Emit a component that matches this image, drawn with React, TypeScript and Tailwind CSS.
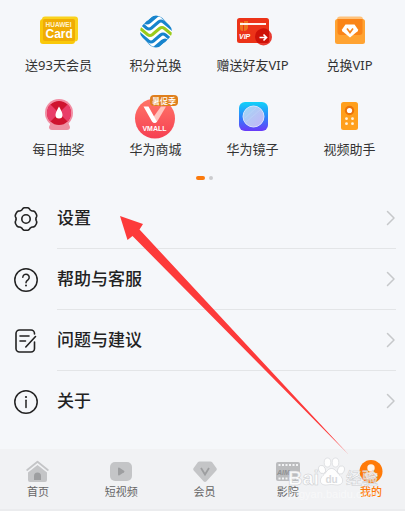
import type { ReactNode } from 'react'

const cjk = "font-['Noto_Sans','Noto_Sans_CJK_SC',sans-serif]"

// Outline of a six-toothed gear centred in a 24x24 box, one tooth pointing up.
const gearPath =
  Array.from({ length: 120 }, (_, i) => {
    const a = (i / 120) * Math.PI * 2
    const r = 10.5 + 0.9 * Math.tanh(0.8 - 1.6 * Math.cos(6 * a))
    return `${i ? 'L' : 'M'}${(12 + r * Math.cos(a)).toFixed(2)} ${(12 + r * Math.sin(a)).toFixed(2)}`
  }).join('') + 'Z'

function Tile({ children }: { children: ReactNode }) {
  return (
    <svg viewBox="0 0 49 48" className="block h-12 w-[49px]" aria-hidden="true">
      {children}
    </svg>
  )
}

function Glyph({ children }: { children: ReactNode }) {
  return (
    <svg viewBox="0 0 24 24" className="block size-6 shrink-0" fill="none" aria-hidden="true">
      {children}
    </svg>
  )
}

const wave = 'M4 17L16.500 27.500Q19 29.500 21.500 27.500L28.500 21.500Q31 19.500 33.500 21.500L46 32'

const shortcuts: { label: string; icon: ReactNode }[] = [
  {
    label: '送93天会员',
    icon: (
      <Tile>
        <rect x="8" y="9.500" width="36" height="25" rx="3" fill="#fad21c" />
        <rect x="6" y="12" width="35" height="25" rx="3" fill="#f9c80a" />
        <rect x="9" y="12" width="32" height="22" rx="2" fill="#f0ac04" />
        <text x="11.500" y="20" fontSize="6.500" fontWeight="700" fill="#fff3cd" fontFamily="Liberation Sans, sans-serif">HUAWEI</text>
        <text x="11.500" y="31" fontSize="12" fontWeight="700" fill="#fff" fontFamily="Liberation Sans, sans-serif">Card</text>
      </Tile>
    ),
  },
  {
    label: '积分兑换',
    icon: (
      <Tile>
        <clipPath id="logo-clip">
          <rect x="11" y="10.500" width="28" height="28" rx="9" transform="rotate(45 25 24.500)" />
        </clipPath>
        <g clipPath="url(#logo-clip)" fill="none" strokeWidth="3">
          <rect x="5" y="5" width="40" height="40" fill="#fff" />
          <path d={wave} transform="translate(-3 -13)" stroke="#1784cd" strokeWidth="4" />
          <path d={wave} transform="translate(-1 -6.500)" stroke="#1784cd" />
          <path d={wave} stroke="#9bcb1c" />
          <path d={wave} transform="translate(1 6.500)" stroke="#1784cd" />
          <path d={wave} transform="translate(3 13)" stroke="#1784cd" strokeWidth="4" />
        </g>
      </Tile>
    ),
  },
  {
    label: '赠送好友VIP',
    icon: (
      <Tile>
        <rect x="9" y="11" width="32" height="25" rx="2.500" fill="#ec3318" />
        <path d="M12 15h3v9q-3 0-3-3zM16 14h4v7q-1 3-4 3z" fill="#ee7420" />
        <rect x="12" y="16" width="26" height="2" fill="#fff2ed" />
        <text x="11" y="32" fontSize="7" fontWeight="700" fontStyle="italic" fill="#fff" fontFamily="Liberation Sans, sans-serif">VIP</text>
        <circle cx="35.500" cy="30" r="8.500" fill="#e83a30" />
        <path d="M27 30a8.500 8.500 0 0 1 14-6.500V34a2 2 0 0 1-2 2H29.500A8.500 8.500 0 0 1 27 30" fill="#cf1208" />
        <path d="M31.500 30.500H38M35.500 27.500l3 3-3 3" stroke="#fff" strokeWidth="1.700" fill="none" />
      </Tile>
    ),
  },
  {
    label: '兑换VIP',
    icon: (
      <Tile>
        <rect x="12" y="9.500" width="26" height="18" rx="3" fill="#ffc27a" />
        <rect x="10" y="12" width="30" height="25" rx="2.500" fill="#ffa332" />
        <path d="M12.500 12h25v13a3 3 0 0 1-3 3h-19a3 3 0 0 1-3-3z" fill="#fa8418" />
        <path d="M20.500 17.500h9L33 22.500q.3 1-.4 1.700L25 30.500l-7.600-6.300q-.7-.7-.4-1.700z" fill="#fff" />
        <path d="M22 21.500l3 4 3-4" stroke="#f8841c" strokeWidth="1.700" fill="none" />
      </Tile>
    ),
  },
  {
    label: '每日抽奖',
    icon: (
      <Tile>
        <circle cx="25" cy="22" r="14" fill="#f18da2" />
        <path d="M17 31h17l2 5q0 3-3 3H18q-3 0-3-3z" fill="#ee90a2" />
        <circle cx="25" cy="22" r="12" fill="#cf142f" />
        <path d="M25 22L16.500 13.500a12 12 0 0 0 0 17zM25 22l8.500-8.500a12 12 0 0 1 0 17z" fill="#e93e69" />
        <path d="M25 15.500q3.500 6 3.500 8.500a3.500 3.500 0 0 1-7 0q0-2.500 3.500-8.500" fill="#fff" />
      </Tile>
    ),
  },
  {
    label: '华为商城',
    icon: (
      <Tile>
        <linearGradient id="mall" x1="0" y1="0" x2="0" y2="1">
          <stop offset="0" stopColor="#ff7668" />
          <stop offset="1" stopColor="#f63f52" />
        </linearGradient>
        <circle cx="24" cy="27.500" r="20" fill="url(#mall)" />
        <path d="M30 15.500h5L26.500 30q-2 3-4.500 0l-1-2z" fill="#ffc4bf" />
        <path d="M12.500 15.500h5L25 29l1 1.500q-2.500 3-5 0z" fill="#fff" />
        <text x="23.500" y="40" fontSize="7" fontWeight="700" textAnchor="middle" fill="#fff" fontFamily="Liberation Sans, sans-serif">VMALL</text>
        <rect x="19" y="4" width="28" height="11" rx="4" fill="#df7f1c" />
        <text x="33" y="12.500" fontSize="8" fontWeight="500" textAnchor="middle" fill="#fff" fontFamily="Noto Sans CJK SC, sans-serif">暑促季</text>
      </Tile>
    ),
  },
  {
    label: '华为镜子',
    icon: (
      <Tile>
        <linearGradient id="mirror" x1="0" y1="0" x2="0" y2="1">
          <stop offset="0" stopColor="#12d2f8" />
          <stop offset="0.5" stopColor="#2b86fb" />
          <stop offset="1" stopColor="#6a3af8" />
        </linearGradient>
        <linearGradient id="glass" x1="0" y1="0" x2="1" y2="1">
          <stop offset="0" stopColor="#9cdcf6" />
          <stop offset="0.5" stopColor="#b5c5f5" />
          <stop offset="1" stopColor="#c3b4f8" />
        </linearGradient>
        <rect x="11" y="11" width="29" height="29" rx="6" fill="url(#mirror)" />
        <circle cx="25.500" cy="25.500" r="10.500" fill="url(#glass)" stroke="#dbe2fb" strokeWidth="1" />
        <path d="M17 27l11-10M18 31l14-12" stroke="#c0d4f8" strokeWidth=".6" />
      </Tile>
    ),
  },
  {
    label: '视频助手',
    icon: (
      <Tile>
        <rect x="16" y="11" width="17" height="28" rx="2.500" fill="#ff9f1c" />
        <circle cx="24.500" cy="19.500" r="4.700" fill="#ec7208" />
        <circle cx="24.500" cy="19.500" r="2.600" fill="#fff" />
        <g fill="#fff3de">
          <circle cx="21.500" cy="27.700" r="1.400" />
          <circle cx="27.500" cy="27.700" r="1.400" />
          <circle cx="21.500" cy="32.700" r="1.400" />
          <circle cx="27.500" cy="32.700" r="1.400" />
        </g>
      </Tile>
    ),
  },
]

const rows: { label: string; icon: ReactNode }[] = [
  {
    label: '设置',
    icon: (
      <Glyph>
        <path d={gearPath} stroke="#222" strokeWidth="1.600" strokeLinejoin="round" />
        <circle cx="12" cy="12" r="4.200" stroke="#222" strokeWidth="1.600" />
      </Glyph>
    ),
  },
  {
    label: '帮助与客服',
    icon: (
      <Glyph>
        <circle cx="12" cy="12" r="11.200" stroke="#222" strokeWidth="1.500" />
        <path d="M8.800 9.300a3.200 3.200 0 1 1 5.300 2.500c-1.200 1-2.100 1.500-2.100 3" stroke="#222" strokeWidth="1.500" strokeLinecap="round" />
        <circle cx="12" cy="17.600" r="1" fill="#222" />
      </Glyph>
    ),
  },
  {
    label: '问题与建议',
    icon: (
      <Glyph>
        <path d="M20.500 5V4.500a3.500 3.500 0 0 0-3.500-3.500H5.500A3.500 3.500 0 0 0 2 4.500v15A3.500 3.500 0 0 0 5.500 23H17a3.500 3.500 0 0 0 3.500-3.500V13" stroke="#222" strokeWidth="1.600" strokeLinecap="round" />
        <path d="M6 7h9M6 12h5.500M21.500 7.500L11.800 18" stroke="#222" strokeWidth="1.600" strokeLinecap="round" />
      </Glyph>
    ),
  },
  {
    label: '关于',
    icon: (
      <Glyph>
        <circle cx="12" cy="12" r="11.200" stroke="#222" strokeWidth="1.500" />
        <circle cx="12" cy="7" r="1.100" fill="#222" />
        <path d="M12 10.300v7.200" stroke="#222" strokeWidth="1.500" strokeLinecap="round" />
      </Glyph>
    ),
  },
]

const tabs: { label: string; icon: ReactNode; active?: boolean }[] = [
  {
    label: '首页',
    icon: (
      <Glyph>
        <path d="M1.200 11L11.500 2.800 21.800 11" stroke="#c4c5c7" strokeWidth="1.800" strokeLinecap="round" strokeLinejoin="round" />
        <path d="M11.500 6L21 13.500V21a2 2 0 0 1-2 2H4a2 2 0 0 1-2-2v-7.500z" fill="#c4c5c7" />
        <path d="M8 21v-4a3.500 3.500 0 0 1 7 0v4z" fill="#9d9ea0" />
      </Glyph>
    ),
  },
  {
    label: '短视频',
    icon: (
      <Glyph>
        <rect x="1" y="3" width="22" height="19" rx="5" fill="#c4c5c7" />
        <path d="M9 9.500q0-1.500 1.500-.8l4.500 3q1 .8 0 1.600l-4.500 3Q9 17 9 15.500z" fill="#9d9ea0" />
      </Glyph>
    ),
  },
  {
    label: '会员',
    icon: (
      <Glyph>
        <path d="M6.500 2.500h11q1 0 1.700.8l4.300 6q.7 1.200-.2 2.200L13.500 22.300q-1.500 1.200-3 0L.7 11.500q-.9-1-.2-2.200l4.300-6q.7-.8 1.700-.8" fill="#c4c5c7" />
        <path d="M8 9l4 6.500L16 9" stroke="#9d9ea0" strokeWidth="1.800" />
      </Glyph>
    ),
  },
  {
    label: '影院',
    icon: (
      <Glyph>
        <rect y="3" width="24" height="19" rx="2" fill="#bbbcbe" />
        <path d="M2.500 6h20M2.500 19.500h20" stroke="#f1f2f4" strokeWidth="2" strokeDasharray="2 1.500" />
        <text x="1" y="15.500" fontSize="7" fontWeight="700" fontStyle="italic" fill="#8f9092" fontFamily="Liberation Sans, sans-serif">AIM</text>
      </Glyph>
    ),
  },
  {
    label: '我的',
    active: true,
    icon: (
      <Glyph>
        <circle cx="12" cy="12.500" r="11.500" fill="#ff7a08" />
        <circle cx="12" cy="9" r="3.700" fill="#fff3e8" />
        <path d="M5.500 14.500q6.500-3 13 0-.5 6-6.500 6t-6.500-6" fill="#ffe9d6" />
        <path d="M8.500 15.500q3.500 3 7 0" stroke="#ff9a45" strokeWidth="1.200" />
      </Glyph>
    ),
  },
]

function Watermark() {
  return (
    <svg
      viewBox="0 0 124 46"
      className="pointer-events-none absolute right-0 bottom-2 h-[46px] w-[124px]"
      aria-hidden="true"
      fill="#fff"
      fillOpacity=".7"
      stroke="#c9cbce"
      strokeWidth=".5"
      fontFamily="Liberation Sans, Noto Sans CJK SC, sans-serif"
    >
      <text x="7" y="28" fontSize="20" fontWeight="700" fillOpacity=".9">Bai</text>
      <g fillOpacity=".9">
        <ellipse cx="41" cy="12.500" rx="3.300" ry="4.200" transform="rotate(-20 41 12.500)" />
        <ellipse cx="46.500" cy="5.500" rx="3.300" ry="4.500" />
        <ellipse cx="54.500" cy="5.500" rx="3.300" ry="4.500" />
        <ellipse cx="60" cy="13" rx="3.300" ry="4.200" transform="rotate(20 60 13)" />
        <path d="M50.500 11.500c4 0 5 4 8.500 7s4 9-2 9.500c-3 0-4-.5-6.500-.5s-3.500.5-6.500.5c-6-.5-5.500-6.500-2-9.500s4.500-7 8.500-7" />
      </g>
      <text x="44.500" y="25.500" fontSize="10" fill="#c7c9cc" stroke="none" fontWeight="700">du</text>
      <text x="65" y="27" fontSize="16" fontWeight="500">经验</text>
      <text x="7" y="41" fontSize="11" stroke="none" fillOpacity=".5">jingyan.baidu.com</text>
    </svg>
  )
}

export default function App() {
  return (
    <div className={`relative flex min-h-screen flex-col overflow-hidden bg-[#f5f7fa] text-[#222] ${cjk}`}>
      <main>
        <div className="grid grid-cols-4 gap-y-4 pt-[7px] pr-[7px] pl-[10px]">
          {shortcuts.map((s) => (
            <button key={s.label} type="button" className="flex flex-col items-center">
              {s.icon}
              <span className="text-[13px] leading-5 whitespace-nowrap text-[#333]">{s.label}</span>
            </button>
          ))}
        </div>

        <div className="flex h-[29px] items-center justify-center gap-1 pt-2 pl-1">
          <span className="h-1 w-[9px] rounded-full bg-[#fb7a0c]" />
          <span className="size-1 rounded-full bg-[#cbccce]" />
        </div>

        <ul>
          {rows.map((r, i) => (
            <li key={r.label}>
              <button type="button" className="flex w-full items-center gap-[19px] pr-[9px] pl-[14px] text-left">
                {r.icon}
                <span
                  className={`flex h-[61px] flex-1 items-center justify-between border-b ${
                    i < rows.length - 1 ? 'border-[#e3e5e7]' : 'border-transparent'
                  }`}
                >
                  <span className="text-[17px] leading-6 font-medium">{r.label}</span>
                  <svg viewBox="0 0 10 16" className="h-4 w-2.5" fill="none" aria-hidden="true">
                    <path d="M1.500 1.500L8 8l-6.500 6.500" stroke="#c6c8ca" strokeWidth="1.500" strokeLinecap="round" strokeLinejoin="round" />
                  </svg>
                </span>
              </button>
            </li>
          ))}
        </ul>
      </main>

      <nav className="mt-auto flex justify-between border-b-2 border-[#ebecee] bg-[#f1f2f4] pt-[10px] pr-[14px] pb-[9px] pl-[18px]">
        {tabs.map((t) => (
          <a key={t.label} href="#" className="flex w-10 flex-col items-center gap-px">
            {t.icon}
            <span
              className={`text-[11px] leading-4 whitespace-nowrap ${t.active ? 'font-medium text-[#ff7a08]' : 'text-[#666]'}`}
            >
              {t.label}
            </span>
          </a>
        ))}
      </nav>

      <Watermark />

      <svg
        viewBox="0 0 405 511"
        className="pointer-events-none absolute top-0 left-0 h-[511px] w-[405px]"
        aria-hidden="true"
      >
        <path d="M120 216L143 224 139.500 229.500 349 455 132.500 236 127.500 240Z" fill="#fd3a3a" />
      </svg>
    </div>
  )
}
